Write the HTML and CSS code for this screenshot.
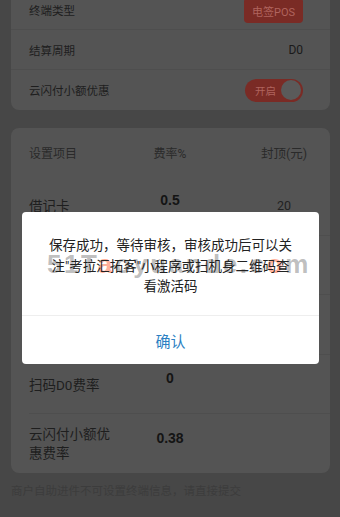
FILE: index.html
```html
<!DOCTYPE html>
<html lang="zh-CN">
<head>
<meta charset="utf-8">
<link rel="stylesheet" href="styles.css">
</head>
<body>
<div class="page">
  <section class="card info">
    <div class="row">
      <span class="label">终端类型</span>
      <span class="tag">电签POS</span>
    </div>
    <div class="row">
      <span class="label">结算周期</span>
      <span class="val">D0</span>
    </div>
    <div class="row">
      <span class="label">云闪付小额优惠</span>
      <span class="switch"><span class="switch-text">开启</span><span class="knob"></span></span>
    </div>
  </section>

  <section class="card rates">
    <div class="rrow head">
      <span class="c1">设置项目</span>
      <span class="c2">费率%</span>
      <span class="c3">封顶(元)</span>
    </div>
    <div class="rrow">
      <span class="c1">借记卡</span>
      <span class="c2 num">0.5</span>
      <span class="c3">20</span>
    </div>
    <div class="rrow">
      <span class="c1">贷记卡</span>
      <span class="c2 num">0.6</span>
      <span class="c3"></span>
    </div>
    <div class="rrow">
      <span class="c1">扫码费率</span>
      <span class="c2 num">0.38</span>
      <span class="c3"></span>
    </div>
    <div class="rrow">
      <span class="c1">扫码D0费率</span>
      <span class="c2 num">0</span>
      <span class="c3"></span>
    </div>
    <div class="rrow last">
      <span class="c1 wrap">云闪付小额优惠费率</span>
      <span class="c2 num">0.38</span>
      <span class="c3"></span>
    </div>
  </section>

  <p class="note">商户自助进件不可设置终端信息，请直接提交</p>
</div>

<div class="dialog">
  <div class="watermark">51T<span class="o">a</span>oyuande.c<span class="o">o</span>m</div>
  <div class="dialog-body">保存成功，等待审核，审核成功后可以关注"考拉汇拓客"小程序或扫机身二维码查看激活码</div>
  <div class="dialog-btn">确认</div>
</div>
</body>
</html>
```

FILE: styles.css
```css
* { box-sizing: border-box; }
html, body {
  margin: 0;
  padding: 0;
}
body {
  width: 340px;
  height: 517px;
  overflow: hidden;
  background: #474747;
  font-family: Roboto, "Noto Sans CJK SC", sans-serif;
  color: #1c1c1c;
  position: relative;
}
.page {
  display: flex;
  flex-direction: column;
}
.card {
  background: #545454;
  border-radius: 8px;
  margin: 0 10px 0 11px;
}
.info {
  margin-top: -10px;
}
.row {
  height: 40px;
  display: flex;
  align-items: center;
  justify-content: space-between;
  padding: 0 27px 0 18px;
  border-bottom: 1px solid #4e4e4e;
}
.row:last-child { border-bottom: none; }
.label {
  font-size: 11.5px;
  color: #1e1e1e;
}
.tag {
  background: #7a2b25;
  color: #b0645e;
  font-size: 11px;
  height: 25px;
  width: 59px;
  border-radius: 4px;
  display: flex;
  align-items: center;
  justify-content: center;
  margin-top: 2px;
}
.val {
  font-size: 12px;
  color: #1a1a1a;
}
.switch {
  width: 58px;
  height: 23px;
  border-radius: 12px;
  background: #7a2b25;
  display: flex;
  align-items: center;
  justify-content: space-between;
  padding: 0 2px 0 10px;
}
.switch-text {
  font-size: 10.5px;
  color: #b0645e;
}
.knob {
  width: 20px;
  height: 20px;
  border-radius: 50%;
  background: #5a5a5a;
}
.rates {
  margin-top: 18px;
  padding-left: 18px;
}
.rrow {
  display: grid;
  grid-template-columns: 100px 82px 1fr;
  align-items: center;
  height: 59.5px;
  border-bottom: 1px solid #4e4e4e;
  font-size: 13.5px;
}
.rrow.head {
  height: 48px;
  font-size: 12px;
  border-bottom: none;
}
.rrow.last {
  border-bottom: none;
  height: 59px;
}
.c1 { color: #1e1e1e; }
.head .c1, .head .c2, .head .c3 { color: #2a2a2a; }
.wrap { width: 84px; line-height: 19px; }
.c2 { text-align: center; }
.c3 {
  text-align: center;
  padding-left: 27px;
  font-size: 12.5px;
  color: #222;
}
.num {
  font-weight: bold;
  font-size: 14px;
  font-family: "Liberation Sans", Arial, sans-serif;
  color: #141414;
  margin-bottom: 11px;
}
.note {
  margin: 9px 0 0 11px;
  font-size: 11.5px;
  line-height: 18px;
  color: #3c3c3c;
}
.dialog {
  position: absolute;
  left: 22px;
  top: 212px;
  width: 297px;
  height: 152px;
  background: #fff;
  border-radius: 4px;
  display: flex;
  flex-direction: column;
}
.dialog-body {
  position: relative;
  padding: 23px 24px 0;
  height: 104px;
  font-size: 13.5px;
  line-height: 20.5px;
  text-align: center;
  color: #222;
  border-bottom: 1px solid #eee;
}
.dialog-btn {
  flex: 1;
  display: flex;
  align-items: center;
  justify-content: center;
  font-size: 15px;
  color: #2b7fc3;
}
.watermark {
  position: absolute;
  left: 25px;
  top: 37px;
  font-family: "Liberation Sans", Arial, sans-serif;
  font-weight: bold;
  font-size: 26px;
  letter-spacing: 2.6px;
  color: rgba(100, 100, 100, 0.42);
  pointer-events: none;
  white-space: nowrap;
}
.watermark .o { color: rgba(255, 110, 70, 0.55); }
```
